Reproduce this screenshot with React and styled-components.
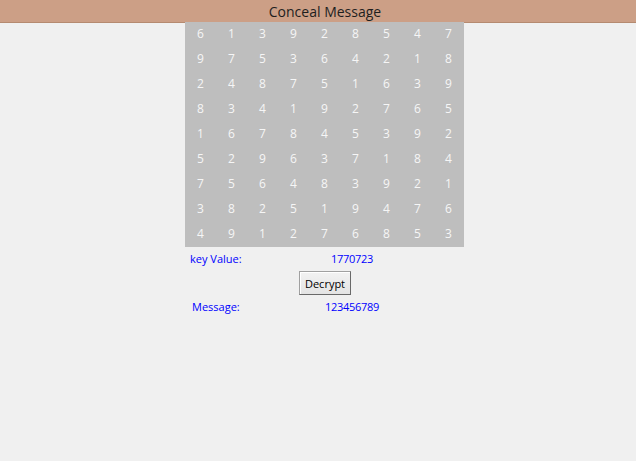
import React from "react";
import styled, { createGlobalStyle } from "styled-components";

const Global = createGlobalStyle`
  html, body { margin: 0; padding: 0; background: #f0f0f0; }
  body { font-family: "Open Sans", "Noto Sans", sans-serif; width: 636px; height: 461px; overflow: hidden; }
`;

const TitleBar = styled.div`
  height: 22px;
  background: #cc9f86;
  border-bottom: 1px solid #b58a70;
  display: flex;
  align-items: center;
  justify-content: center;
  font-size: 14px;
  color: #1e1e1e;
  padding-left: 14px;
  box-sizing: content-box;
`;

const Body = styled.div`
  margin-left: 185px;
  width: 279px;
  display: flex;
  flex-direction: column;
`;

const Grid = styled.div`
  display: grid;
  grid-template-columns: repeat(9, 31px);
  grid-auto-rows: 25px;
  background: #bebebe;
  margin-top: -1px;
`;

const Cell = styled.div`
  display: flex;
  align-items: center;
  justify-content: center;
  color: #f6f6f6;
  font-size: 12px;
  padding-bottom: 3px;
`;

const InfoRow = styled.div`
  display: flex;
  align-items: center;
  height: ${(p) => p.$h}px;
  color: #0000ff;
  font-size: 11px;
`;

const Label = styled.span`
  box-sizing: border-box;
  width: ${(p) => p.$w}px;
  padding-left: ${(p) => p.$pad}px;
`;

const Value = styled.span`
  letter-spacing: -0.3px;
`;

const ButtonRow = styled.div`
  display: flex;
  padding-left: 114px;
  padding-top: 2px;
`;

const Button = styled.button`
  width: 52px;
  height: 24px;
  padding: 0;
  font-family: "Open Sans", "Noto Sans", sans-serif;
  font-size: 11px;
  color: #000;
  background: linear-gradient(#f2f2f2, #e4e4e4);
  border: 1px solid #a0a0a0;
  border-right-color: #696969;
  border-bottom-color: #696969;
  box-shadow: inset 1px 1px 0 #ffffff;
`;

const rows = [
  "613928547",
  "975364218",
  "248751639",
  "834192765",
  "167845392",
  "529637184",
  "756483921",
  "382519476",
  "491276853",
];

export default function App() {
  return (
    <>
      <Global />
      <TitleBar>Conceal Message</TitleBar>
      <Body>
        <Grid>
          {rows.flatMap((r, i) =>
            r.split("").map((d, j) => <Cell key={`${i}-${j}`}>{d}</Cell>)
          )}
        </Grid>
        <InfoRow $h={22}>
          <Label $w={146} $pad={5}>key Value:</Label>
          <Value>1770723</Value>
        </InfoRow>
        <ButtonRow>
          <Button>Decrypt</Button>
        </ButtonRow>
        <InfoRow $h={22}>
          <Label $w={140} $pad={7}>Message:</Label>
          <Value>123456789</Value>
        </InfoRow>
      </Body>
    </>
  );
}
